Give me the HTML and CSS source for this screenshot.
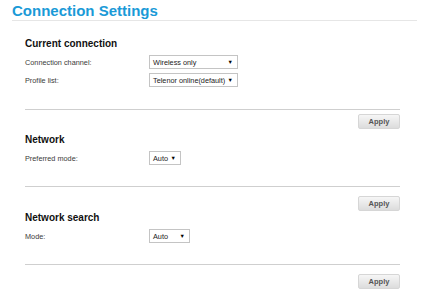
FILE: index.html
```html
<!DOCTYPE html>
<html>
<head>
<meta charset="utf-8">
<link rel="stylesheet" href="styles.css">
</head>
<body>
<div class="page">
  <h1 class="title">Connection Settings</h1>

  <div class="section sec-current">
    <h2 class="heading">Current connection</h2>
    <div class="row">
      <span class="label">Connection channel:</span>
      <div class="select w-wide"><span>Wireless only</span><span class="arrow">▼</span></div>
    </div>
    <div class="row">
      <span class="label">Profile list:</span>
      <div class="select w-wide"><span>Telenor online(default)</span><span class="arrow">▼</span></div>
    </div>
  </div>
  <div class="actions act-first"><button class="btn">Apply</button></div>

  <div class="section sec-network">
    <h2 class="heading">Network</h2>
    <div class="row">
      <span class="label">Preferred mode:</span>
      <div class="select w-small"><span>Auto</span><span class="arrow">▼</span></div>
    </div>
  </div>
  <div class="actions"><button class="btn">Apply</button></div>

  <div class="section sec-search">
    <h2 class="heading">Network search</h2>
    <div class="row">
      <span class="label">Mode:</span>
      <div class="select w-mid"><span>Auto</span><span class="arrow">▼</span></div>
    </div>
  </div>
  <div class="actions"><button class="btn">Apply</button></div>
</div>
</body>
</html>
```

FILE: styles.css
```css
html, body {
  margin: 0;
  padding: 0;
  background: #ffffff;
}
body {
  font-family: "Liberation Sans", Arial, sans-serif;
  color: #333333;
}
.page {
  width: 405px;
  margin-left: 12px;
}
.title {
  margin: 0;
  padding-top: 2px;
  font-size: 15px;
  line-height: 18px;
  font-weight: bold;
  color: #1a9ad7;
  border-bottom: 1px solid #e6e6e6;
}
.section {
  margin: 0 17px 0 13px;
  padding-bottom: 21px;
  border-bottom: 1px solid #cfcfcf;
  display: flex;
  flex-direction: column;
  gap: 4px;
}
.sec-current {
  padding-top: 17px;
  padding-bottom: 22px;
}
.sec-network {
  padding-top: 5px;
}
.sec-search {
  padding-top: 1px;
}
.heading {
  margin: 0 0 1px 0;
  font-size: 10px;
  line-height: 12px;
  font-weight: bold;
  color: #111111;
}
.row {
  display: flex;
  align-items: center;
  height: 14px;
}
.label {
  width: 124px;
  font-size: 7.3px;
  color: #3a3a3a;
}
.select {
  box-sizing: border-box;
  height: 14px;
  border: 1px solid #c4c4c4;
  background: #ffffff;
  display: flex;
  align-items: center;
  justify-content: space-between;
  padding: 0 4px 0 3px;
  font-size: 7.3px;
  color: #222222;
}
.arrow {
  font-size: 5.5px;
  color: #000000;
}
.w-wide { width: 89px; }
.w-small { width: 32px; }
.w-mid { width: 41px; }
.actions {
  display: flex;
  justify-content: flex-end;
  margin-right: 17px;
  padding-top: 9px;
}
.act-first {
  padding-top: 4px;
}
.btn {
  box-sizing: border-box;
  width: 42px;
  height: 15px;
  padding: 0;
  border: 1px solid #d6d6d6;
  border-radius: 2px;
  background: linear-gradient(#f6f6f6, #dcdcdc);
  font-family: "Liberation Sans", Arial, sans-serif;
  font-size: 7.5px;
  font-weight: bold;
  color: #555555;
}
```
